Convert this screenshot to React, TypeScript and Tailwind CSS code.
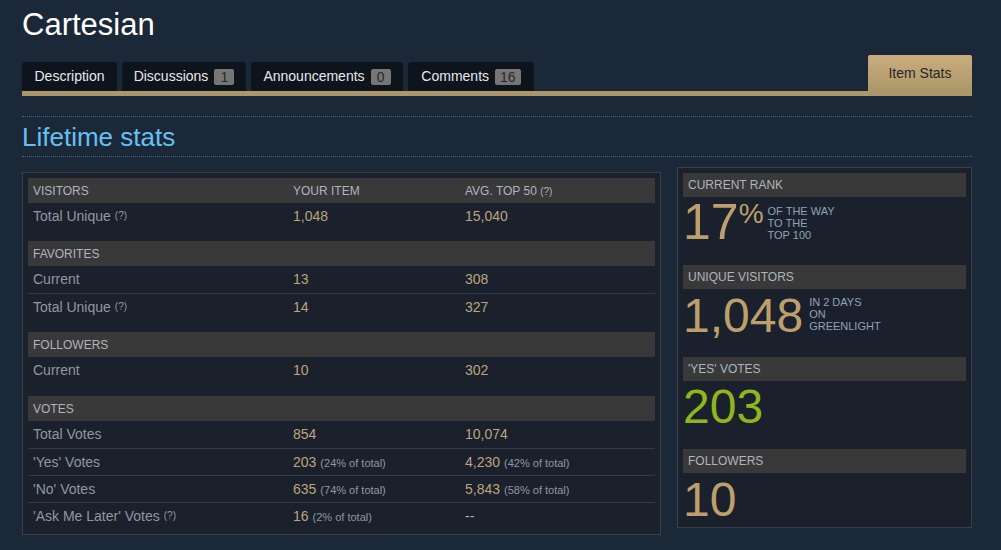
import React from "react";

const F = { fontFamily: '"Liberation Sans", Arial, Helvetica, sans-serif' };

function Q() {
  return <sup className="text-[10px] text-[#8f98a0] ml-[4px] relative top-[-2px]">(?)</sup>;
}

type Row = { label: React.ReactNode; a: React.ReactNode; b: React.ReactNode };

function Val({ v, pct }: { v: string; pct?: string }) {
  return (
    <span>
      <span className="text-[#bda47a]">{v}</span>
      {pct && <span className="text-[11px] text-[#8f98a0] ml-[4px]">{pct}</span>}
    </span>
  );
}

function Section({ title, head, rows, mb }: { title: string; head?: boolean; rows: Row[]; mb: string }) {
  return (
    <div className={mb}>
      <div className="flex h-[25px] items-center bg-[#393939] text-[12px] text-[#adb5bd] uppercase">
        <div className="w-[260px] pl-[5px]">{title}</div>
        {head && (
          <>
            <div className="w-[172px] pl-[5px]">YOUR ITEM</div>
            <div className="flex-1 pl-[5px]">
              AVG. TOP 50 <span className="text-[10px]">(?)</span>
            </div>
          </>
        )}
      </div>
      {rows.map((r, i) => (
        <div
          key={i}
          className={
            "flex h-[27px] items-center text-[14px] " + (i > 0 ? "border-t border-[#343a42]" : "")
          }
        >
          <div className="w-[260px] pl-[5px] text-[#8f98a0]">{r.label}</div>
          <div className="w-[172px] pl-[5px]">{r.a}</div>
          <div className="flex-1 pl-[5px]">{r.b}</div>
        </div>
      ))}
    </div>
  );
}

function SideHead({ t }: { t: string }) {
  return (
    <div className="h-[24px] bg-[#393939] flex items-center pl-[5px] text-[12px] text-[#adb5bd] uppercase">
      {t}
    </div>
  );
}

function Tab({ label, badge, w }: { label: string; badge?: string; w: string }) {
  return (
    <div className={"h-[29px] rounded-t-[3px] bg-[#0e141c] flex items-center justify-center text-[14px] text-[#e6e9ec] " + w}>
      {label}
      {badge && (
        <span className="ml-[6px] h-[16px] min-w-[20px] px-[5px] rounded-[2px] bg-[#767676] text-[#2a2a2a] text-[14px] leading-[16px] flex items-center justify-center">
          {badge}
        </span>
      )}
    </div>
  );
}

export default function App() {
  return (
    <div className="min-h-[550px] w-full bg-[#1b2838] overflow-hidden" style={F}>
      <div className="w-[950px] ml-[22px]">
        <div className="pt-[9px] text-[31px] leading-none text-white">Cartesian</div>
        <div className="mt-[15px] flex items-end">
          <div className="flex gap-[5px]">
            <Tab label="Description" w="w-[95px]" />
            <Tab label="Discussions" badge="1" w="w-[124px]" />
            <Tab label="Announcements" badge="0" w="w-[152px]" />
            <Tab label="Comments" badge="16" w="w-[126px]" />
          </div>
          <div className="flex-1" />
          <div className="w-[104px] h-[36px] rounded-t-[2px] bg-gradient-to-b from-[#c9ad7e] to-[#ad9769] flex items-center justify-center text-[14px] text-[#262626]">
            Item Stats
          </div>
        </div>
        <div className="h-[5px] bg-[#ad976a]" />
        <div className="mt-[20px] border-t border-dotted border-[#3e6e93]" />
        <div className="h-[39px] pt-[7px] text-[26px] leading-none text-[#66c0f4]">Lifetime stats</div>
        <div className="border-t border-dotted border-[#3e6e93]" />
        <div className="flex items-start gap-[16px] pt-[10px]">
          <div className="mt-[5px] w-[639px] border border-[#37404b] bg-[#1a212c] p-[5px]">
            <Section
              title="VISITORS"
              head
              mb="mb-[11px]"
              rows={[{ label: <>Total Unique<Q /></>, a: <Val v="1,048" />, b: <Val v="15,040" /> }]}
            />
            <Section
              title="FAVORITES"
              mb="mb-[12px]"
              rows={[
                { label: "Current", a: <Val v="13" />, b: <Val v="308" /> },
                { label: <>Total Unique<Q /></>, a: <Val v="14" />, b: <Val v="327" /> },
              ]}
            />
            <Section
              title="FOLLOWERS"
              mb="mb-[12px]"
              rows={[{ label: "Current", a: <Val v="10" />, b: <Val v="302" /> }]}
            />
            <Section
              title="VOTES"
              mb=""
              rows={[
                { label: "Total Votes", a: <Val v="854" />, b: <Val v="10,074" /> },
                { label: "'Yes' Votes", a: <Val v="203" pct="(24% of total)" />, b: <Val v="4,230" pct="(42% of total)" /> },
                { label: "'No' Votes", a: <Val v="635" pct="(74% of total)" />, b: <Val v="5,843" pct="(58% of total)" /> },
                { label: <>'Ask Me Later' Votes<Q /></>, a: <Val v="16" pct="(2% of total)" />, b: <span className="text-[#acb4bc]">--</span> },
              ]}
            />
          </div>
          <div className="w-[295px] border border-[#37404b] bg-[#1a212c] p-[5px]">
            <SideHead t="CURRENT RANK" />
            <div className="h-[68px] flex items-start">
              <span className="text-[50px] leading-none text-[#bd9f6d]">17</span>
              <span className="text-[28px] leading-none text-[#bd9f6d] mt-[3px]">%</span>
              <div className="ml-[4px] mt-[8px] text-[11px] leading-[12px] text-[#8fa3b6] uppercase">
                OF THE WAY<br />TO THE<br />TOP 100
              </div>
            </div>
            <SideHead t="UNIQUE VISITORS" />
            <div className="h-[68px] flex items-start">
              <span className="mt-[3px] text-[48px] leading-none text-[#bd9f6d]">1,048</span>
              <div className="ml-[6px] mt-[7px] text-[11px] leading-[12px] text-[#8fa3b6] uppercase">
                IN 2 DAYS<br />ON<br />GREENLIGHT
              </div>
            </div>
            <SideHead t="'YES' VOTES" />
            <div className="h-[68px]">
              <div className="pt-[2px] text-[48px] leading-none text-[#8fb61d]">203</div>
            </div>
            <SideHead t="FOLLOWERS" />
            <div className="h-[49px]">
              <div className="pt-[3px] text-[48px] leading-none text-[#bd9f6d]">10</div>
            </div>
          </div>
        </div>
      </div>
    </div>
  );
}
